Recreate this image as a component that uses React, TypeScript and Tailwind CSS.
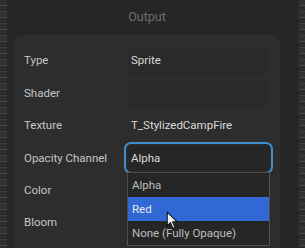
import React from "react";

const rows = [
  { label: "Type", value: "Sprite", box: true },
  { label: "Shader", value: "", box: true },
  { label: "Texture", value: "T_StylizedCampFire", box: false },
  { label: "Opacity Channel", value: "Alpha", box: true, focus: true },
  { label: "Color", value: "", box: true },
  { label: "Bloom", value: "", box: true },
];

const options = ["Alpha", "Red", "None (Fully Opaque)"];

const Strip = () => (
  <div className="h-full w-full bg-[repeating-linear-gradient(180deg,#303030_0px,#303030_5px,#4a4a4a_5px,#4a4a4a_6px,#2c2c2c_6px,#2c2c2c_11px,#3e3e3e_11px,#3e3e3e_12px)]" />
);

const Cursor = () => (
  <svg width="13" height="19" viewBox="0 0 12 18" className="absolute left-[38px] top-[38px]">
    <path
      d="M1 1 L1 14 L4 11 L6.5 16.5 L8.5 15.6 L6 10.3 L10.5 10.3 Z"
      fill="#f2f2f2"
      stroke="#111"
      strokeWidth="1"
      strokeLinejoin="round"
    />
  </svg>
);

export default function App() {
  return (
    <div
      className="flex h-[248px] w-[305px] overflow-hidden bg-[#262626]"
      style={{ fontFamily: "Roboto, 'Liberation Sans', sans-serif" }}
    >
      <div className="h-full w-[7px]">
        <Strip />
      </div>
      <div className="flex flex-1 flex-col pl-[7px] pr-[19px]">
        <div className="flex h-[35px] items-center justify-center text-[12.5px] text-[#6f6f6f]">
          Output
        </div>
        <div className="flex flex-1 flex-col gap-[6.4px] rounded-t-[9px] bg-[#2d2d2d] px-[10px] pt-[13px]">
          {rows.map((r) => (
            <div key={r.label} className="flex h-[26px] items-center">
              <div className="w-[103px] text-[11.5px] text-[#c6c6c6]">{r.label}</div>
              <div
                className={`relative flex h-[26px] w-[143px] items-center rounded-[4px] px-[4px] text-[11.5px] text-[#dadada] ${
                  r.box ? "bg-[#2a2a2a]" : ""
                } ${r.focus ? "bg-[#262626] outline-2 outline-offset-1 outline-[#3f8fcf]" : ""}`}
              >
                {r.value}
                {r.focus && (
                  <div className="absolute left-0 top-[27px] z-10 flex w-[143px] flex-col border border-[#4f4f4f] bg-[#262626]">
                    {options.map((o) => (
                      <div
                        key={o}
                        className={`flex h-[24px] items-center px-[4px] text-[11.5px] ${
                          o === "Red" ? "bg-[#3068d6] text-[#e8e8e8]" : "text-[#bdbdbd]"
                        }`}
                      >
                        {o}
                      </div>
                    ))}
                    <Cursor />
                  </div>
                )}
              </div>
            </div>
          ))}
        </div>
      </div>
      <div className="h-full w-[6px]">
        <Strip />
      </div>
    </div>
  );
}
